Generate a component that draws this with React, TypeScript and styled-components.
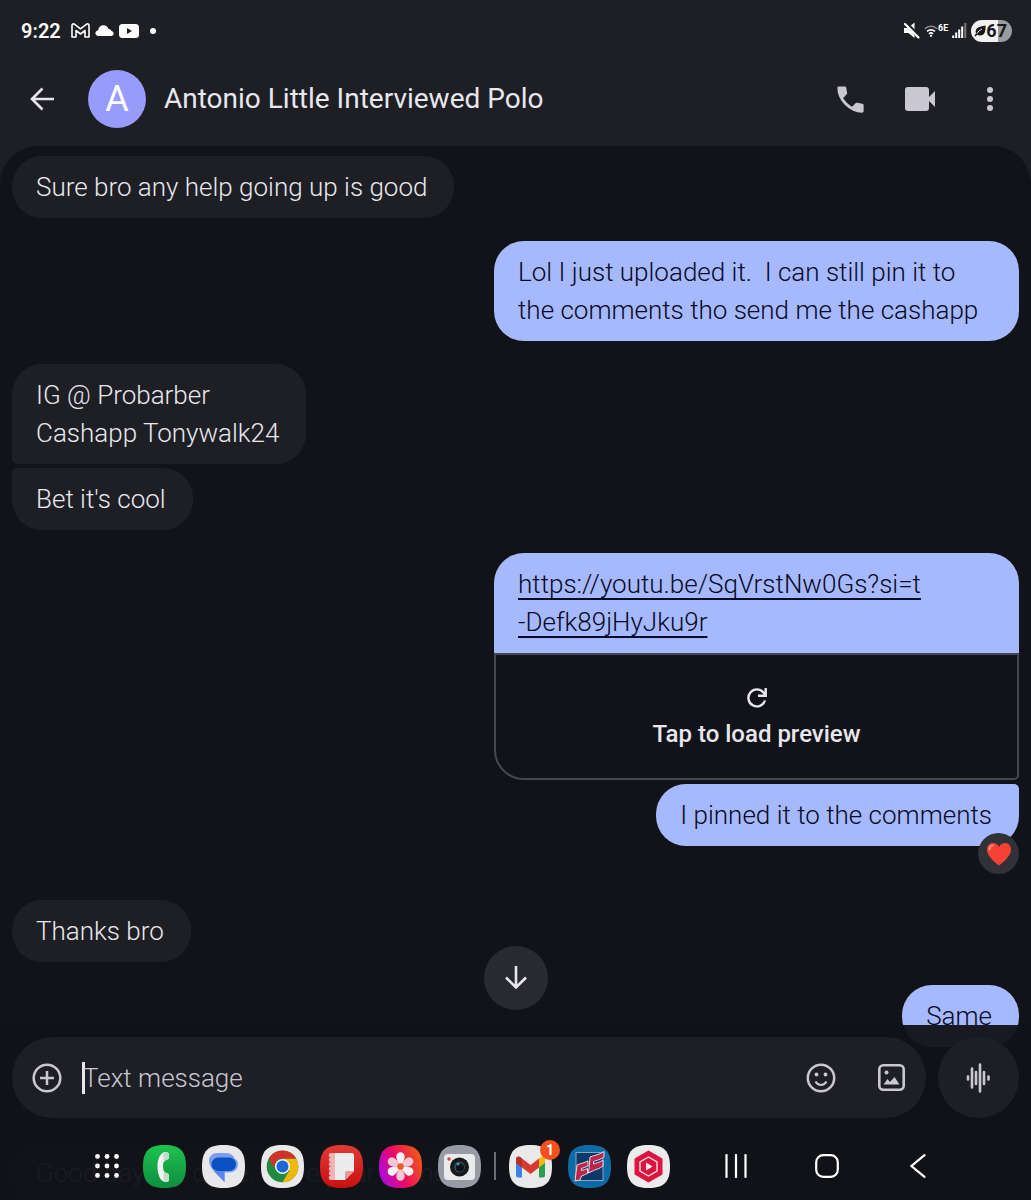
import React from 'react';
import styled, { createGlobalStyle, css } from 'styled-components';

const c = {
  bg: '#121318',
  surface: '#1e1f25',
  raised: '#292a2f',
  reaction: '#313238',
  outline: '#45464f',
  sent: '#a6b9ff',
  sentText: '#060a24',
  text: '#e8e7ee',
  muted: '#c9c8d2',
};

const GlobalStyle = createGlobalStyle`
  * { box-sizing: border-box; }
  body {
    margin: 0;
    background: ${c.surface};
    color: ${c.text};
    font-family: Roboto, "Noto Sans", sans-serif;
  }
  svg { display: block; flex: none; }
  button { font: inherit; color: inherit; background: none; border: 0; padding: 0; cursor: pointer; }
`;

const Screen = styled.div`
  height: 100vh;
  display: flex;
  flex-direction: column;
  overflow: hidden;
`;

const StatusBar = styled.div`
  display: flex;
  align-items: center;
  justify-content: space-between;
  height: 61px;
  padding: 0 19px 0 21px;
  color: #fff;
  flex: none;
`;

const StatusGroup = styled.div<{ $gap: number }>`
  display: flex;
  align-items: center;
  gap: ${p => p.$gap}px;
`;

const Clock = styled.time`
  font-size: 20px;
  font-weight: 600;
  margin-right: 5px;
`;

const Wifi = styled.div`
  display: flex;
  align-items: flex-start;
  font-size: 9px;
  line-height: 9px;
  font-weight: 700;
`;

const Battery = styled.div`
  display: flex;
  align-items: center;
  height: 22px;
  padding: 0 5px 0 3px;
  border-radius: 11px;
  background: linear-gradient(90deg, #f1f1f1 67%, #9b9c9e 67%);
  color: #17181c;
  font-size: 18px;
  line-height: 22px;
  font-weight: 700;
`;

const AppBar = styled.header`
  display: flex;
  align-items: center;
  height: 76px;
  margin-bottom: 9px;
  padding: 0 16px 0 24px;
  flex: none;
`;

const IconButton = styled.button<{ $size: number; $color?: string }>`
  display: flex;
  align-items: center;
  justify-content: center;
  width: ${p => p.$size}px;
  height: ${p => p.$size}px;
  color: ${p => p.$color || c.muted};
  flex: none;
`;

const Avatar = styled.div`
  display: flex;
  align-items: center;
  justify-content: center;
  width: 58px;
  height: 58px;
  margin: 0 18px 0 28px;
  border-radius: 50%;
  background: #979bfb;
  color: #fff;
  font-size: 36px;
  font-weight: 400;
  flex: none;
`;

const Title = styled.h1`
  flex: 1;
  margin: 0;
  font-size: 28px;
  line-height: 36px;
  font-weight: 400;
`;

const Actions = styled.div`
  display: flex;
  gap: 20px;
`;

const Body = styled.main`
  display: grid;
  grid-template: minmax(0, 1fr) / minmax(0, 1fr);
  flex: 1;
  min-height: 0;
  background: ${c.bg};
  border-radius: 38px 38px 0 0;
  overflow: hidden;
`;

const Thread = styled.section`
  grid-area: 1 / 1;
  display: flex;
  flex-direction: column;
  gap: 23px;
  padding: 10px 12px 0;
  overflow: hidden;
`;

const Group = styled.div<{ $sent?: boolean; $after?: number }>`
  display: flex;
  flex-direction: column;
  align-items: ${p => (p.$sent ? 'flex-end' : 'flex-start')};
  gap: 4px;
  margin-bottom: ${p => p.$after || 0}px;
  flex: none;
`;

type Join = 'top' | 'bottom';

const Bubble = styled.p<{ $sent?: boolean; $join?: Join }>`
  position: relative;
  margin: 0;
  max-width: 525px;
  padding: 12px 27px 12px 24px;
  border-radius: 30px;
  background: ${p => (p.$sent ? c.sent : c.surface)};
  color: ${p => (p.$sent ? c.sentText : c.text)};
  font-size: 26px;
  font-weight: 300;
  line-height: 38px;
  white-space: pre-wrap;
  ${p => p.$join === 'top' && (p.$sent
    ? css`border-top-right-radius: 5px;`
    : css`border-top-left-radius: 5px;`)}
  ${p => p.$join === 'bottom' && (p.$sent
    ? css`border-bottom-right-radius: 5px;`
    : css`border-bottom-left-radius: 5px;`)}
`;

const LinkCard = styled.article`
  width: 525px;
  max-width: 100%;
`;

const LinkText = styled.div`
  padding: 12px 24px;
  border-radius: 30px 30px 0 0;
  background: ${c.sent};
  font-size: 26px;
  font-weight: 300;
  line-height: 38px;
`;

const Link = styled.a`
  color: ${c.sentText};
  text-decoration-thickness: 2px;
  text-underline-offset: 5px;
  text-decoration-skip-ink: none;
`;

const Preview = styled.button`
  && {
    display: flex;
    flex-direction: column;
    align-items: center;
    justify-content: center;
    gap: 12px;
    width: 100%;
    height: 127px;
    padding-top: 2px;
    border: 2px solid ${c.outline};
    border-radius: 0 0 5px 30px;
    font-size: 24px;
    line-height: 28px;
    font-weight: 500;
  }
`;

const Reaction = styled.span`
  position: absolute;
  right: 0;
  bottom: -28px;
  display: flex;
  align-items: center;
  justify-content: center;
  width: 41px;
  height: 41px;
  border-radius: 50%;
  background: ${c.reaction};
`;

const Footer = styled.footer`
  grid-area: 1 / 1;
  align-self: end;
  position: relative;
  padding: 12px 12px 0;
  background: rgba(18, 19, 24, 0.96);
`;

const JumpButton = styled.button`
  && {
    position: absolute;
    left: 50%;
    bottom: 100%;
    display: flex;
    align-items: center;
    justify-content: center;
    width: 64px;
    height: 64px;
    margin: 0 0 15px -32px;
    border-radius: 50%;
    background: ${c.raised};
  }
`;

const Composer = styled.form`
  display: flex;
  gap: 12px;
`;

const Field = styled.label`
  display: flex;
  align-items: center;
  flex: 1;
  height: 81px;
  padding: 0 14px;
  border-radius: 41px;
  background: ${c.surface};
`;

const Caret = styled.span`
  width: 3px;
  height: 32px;
  margin: 0 -2px 0 14px;
  background: ${c.text};
`;

const TextInput = styled.input`
  flex: 1;
  min-width: 0;
  padding: 0;
  border: 0;
  outline: 0;
  background: none;
  color: ${c.text};
  font: 300 26px/38px Roboto, "Noto Sans", sans-serif;
  &::placeholder { color: ${c.muted}; opacity: 1; }
`;

const FieldActions = styled.div`
  display: flex;
  gap: 28px;
`;

const VoiceButton = styled(IconButton)`
  && {
    border-radius: 50%;
    background: ${c.surface};
  }
`;

const Taskbar = styled.nav`
  display: flex;
  align-items: center;
  gap: 13px;
  height: 82px;
  padding: 14px 0 0 75px;
  color: #fff;
`;

const AppRow = styled.div`
  display: flex;
  align-items: center;
  gap: 16px;
`;

const AppButton = styled.button`
  position: relative;
  flex: none;
`;

const Separator = styled.span`
  width: 2px;
  height: 28px;
  background: #6d6e73;
`;

const Badge = styled.span`
  position: absolute;
  top: -5px;
  right: -8px;
  width: 20px;
  height: 20px;
  border-radius: 50%;
  background: #f4511e;
  color: #fff;
  font-size: 14px;
  line-height: 20px;
  font-weight: 700;
  text-align: center;
`;

const NavRow = styled.div`
  display: flex;
  margin-left: 7px;
`;

const NavButton = styled.button`
  && {
    display: flex;
    align-items: center;
    justify-content: center;
    width: 91px;
    height: 44px;
  }
`;

const SQUIRCLE = 'M21.5 0C37 0 43 6 43 21.5S37 43 21.5 43 0 37 0 21.5 6 0 21.5 0z';

function AppIcon({ fill, children }: { fill: string; children: React.ReactNode }) {
  return (
    <svg width="43" height="43" viewBox="0 0 43 43" aria-hidden="true">
      <path d={SQUIRCLE} fill={fill} />
      {children}
    </svg>
  );
}

const PhoneApp = () => (
  <AppIcon fill="url(#phoneBg)">
    <defs>
      <linearGradient id="phoneBg" x1="0" y1="0" x2="0" y2="1">
        <stop offset="0" stopColor="#1fc24e" />
        <stop offset="1" stopColor="#0d8f3f" />
      </linearGradient>
    </defs>
    <path d="M22 7c-5 1-7.5 7-7.5 14.500S17 36 22 37c2 .4 4-.4 4-2.500v-3.800c0-1.700-1.300-2.300-2.700-2.700-2.400-.7-3.300-2.800-3.300-6.500s.9-5.800 3.300-6.500c1.400-.4 2.700-1 2.700-2.700V9.500C26 7.400 24 6.600 22 7z" fill="#f1f3f1" />
    <path d="M22 7c2-.4 4 .4 4 2.500v2.800c0 1.700-1.300 2.300-2.700 2.700-1 .3-1.700.8-2.200 1.500C20.500 13 20 9 22 7zM22 37c2 .4 4-.4 4-2.500v-3.800c0-1.700-1.300-2.300-2.700-2.700-1-.3-1.700-.8-2.200-1.500C20.500 30 20 35 22 37z" fill="#c3dcc9" />
  </AppIcon>
);

const MessagesApp = () => (
  <AppIcon fill="#e8e8ea">
    <path d="M14.500 8H24a9 9 0 0 1 8.500 5.500c2 1 3.500 3 3.500 5.500 0 5-4 8.500-9 8.500h-4.500V37L12 26.500C9 23 7 19.500 7 15.500A7.500 7.500 0 0 1 14.500 8z" fill="#7b9df0" />
    <path d="M12 26h10.500v11z" fill="#5c86ec" />
    <rect x="9.500" y="12.500" width="24.500" height="13.500" rx="6.700" fill="#0b50c0" />
  </AppIcon>
);

const ChromeApp = () => (
  <AppIcon fill="#e9e9e9">
    <circle cx="21.500" cy="21.500" r="15.800" fill="#1f8a40" />
    <path d="M21.500 13.500H35.200a15.800 15.800 0 0 1-13.700 23.800l6.900-11.800z" fill="#eeb80c" />
    <path d="M7.800 13.600a15.800 15.800 0 0 1 27.400-.1H21.500a8 8 0 0 0-6.900 12z" fill="#cf3329" />
    <circle cx="21.500" cy="21.500" r="7.600" fill="#f1f1f1" />
    <circle cx="21.500" cy="21.500" r="6" fill="#1a67d8" />
  </AppIcon>
);

const NotesApp = () => (
  <AppIcon fill="url(#notesBg)">
    <defs>
      <linearGradient id="notesBg" x1="0" y1="0" x2="0" y2="1">
        <stop offset="0" stopColor="#e23a38" />
        <stop offset="1" stopColor="#c90f10" />
      </linearGradient>
    </defs>
    <path d="M11 8h4v27h-4a2 2 0 0 1 0-4.500 2.200 2.200 0 0 1 0-4.500 2.200 2.200 0 0 1 0-4.500 2.200 2.200 0 0 1 0-4.500 2.200 2.200 0 0 1 0-4.500 2.200 2.200 0 0 1 0-4.500z" fill="#f0b4b3" />
    <path d="M15 8h17a2 2 0 0 1 2 2v16l-9 9H15z" fill="#ececec" />
    <path d="M34 26l-9 9v-7a2 2 0 0 1 2-2z" fill="#e39a99" />
  </AppIcon>
);

const GalleryApp = () => (
  <AppIcon fill="url(#galleryBg)">
    <defs>
      <linearGradient id="galleryBg" x1="0" y1=".7" x2="1" y2=".3">
        <stop offset="0" stopColor="#a80be0" />
        <stop offset=".45" stopColor="#ec0a67" />
        <stop offset="1" stopColor="#ef5a12" />
      </linearGradient>
    </defs>
    {[60, 180, 300, 0, 120, 240].map(a => (
      <path key={a} d="M21.500 21.500c-1.500-3-4.200-6-4.200-10a4.200 4.200 0 0 1 8.400 0c0 4-2.700 7-4.200 10z" fill={a % 120 === 0 ? '#f9f3f5' : '#f3c8d5'} transform={`rotate(${a} 21.5 21.5)`} />
    ))}
    <circle cx="21.500" cy="21.500" r="3.200" fill="#ee5a22" />
  </AppIcon>
);

const CameraApp = () => (
  <AppIcon fill="#969ba5">
    <rect x="6" y="9" width="31" height="26" rx="4" fill="#e9eaeb" />
    <circle cx="11" cy="14" r="1.700" fill="#e23b3b" />
    <circle cx="21.500" cy="22" r="9.500" fill="#17181b" />
    <circle cx="21.500" cy="22" r="5.500" fill="#2c4a5c" />
    <circle cx="22" cy="22.500" r="4" fill="#0b1015" />
    <circle cx="20" cy="19" r="1.500" fill="#4e8f96" />
  </AppIcon>
);

const GmailApp = () => (
  <AppIcon fill="#e9e9e9">
    <path d="M7 17v13.500a2 2 0 0 0 2 2h4V21z" fill="#3f7fe8" />
    <path d="M36 17v13.500a2 2 0 0 1-2 2h-4V21z" fill="#2b9e4b" />
    <path d="M30 13.500 32 12c2-1.400 4 0 4 2.300V18l-6 4.500z" fill="#f2b90d" />
    <path d="M7 14.300c0-2.300 2.200-3.700 4-2.300l10.500 8 8.500-6.500v9L21.500 29 13 22.500 7 18z" fill="#d83a30" />
    <path d="M7 14.300V18l6 4.500v-9L11 12c-1.800-1.400-4 0-4 2.300z" fill="#b9302a" />
  </AppIcon>
);

const FinanceApp = () => (
  <AppIcon fill="#0f6ba6">
    <rect x="8" y="7.500" width="27" height="28" fill="#0d3868" stroke="#7fa8c9" strokeWidth="1" />
    <path d="M22 12c5-2 9-2 14-5.500v5.500c-4 3-7 3-10.500 4.500V19c3-1 6-1.500 9.500-4v6c-4 3-6 3-9.500 4.500L20.500 28z" fill="#bd2648" stroke="#e6d9e2" strokeWidth="1" />
    <path d="M9 20c3-1.500 7-2 11-4v5c-2 1-4 1.500-6.500 2.500v2c2-.5 4-1 6-2v5c-2 1-4 1.500-6 2.500L12 35l-5 1z" fill="#bd2648" stroke="#e6d9e2" strokeWidth="1" />
  </AppIcon>
);

const StudioApp = () => (
  <AppIcon fill="#ebebeb">
    <path d="M21.500 6.500 34.500 14v15l-13 7.500-13-7.500V14z" fill="#dd1440" stroke="#dd1440" strokeWidth="2" strokeLinejoin="round" />
    <path d="M21.500 12 30 16.800v9.400L21.500 31 13 26.200v-9.400z" fill="none" stroke="#f2dfe3" strokeWidth="1.400" strokeLinejoin="round" />
    <path d="M19 17.500v8l6.500-4z" fill="#f6eef0" />
  </AppIcon>
);

const stroke = { fill: 'none', stroke: 'currentColor' } as const;

export default function App() {
  return (
    <Screen>
      <GlobalStyle />
      <StatusBar>
        <StatusGroup $gap={5}>
          <Clock>9:22</Clock>
          <svg width="19" height="15" viewBox="0 0 19 15">
            <path d="M1 14V2.500C1 1 2.500.5 3.700 1.300l5.800 4.500 5.800-4.500C16.500.5 18 1 18 2.500V14h-4V7.500L9.500 11 5 7.500V14z" {...stroke} strokeWidth="1.600" strokeLinejoin="round" />
          </svg>
          <svg width="19" height="11" viewBox="0 0 19 11">
            <path d="M3.500 11C-.5 11-.5 6 3 5.500 3.500 2 6 .3 8.500.3c2.500 0 4.300 1.500 5 3.700 1.500-.2 2.500.7 2.800 2C19.500 6.500 19.500 11 16 11z" fill="currentColor" />
          </svg>
          <svg width="20" height="14" viewBox="0 0 20 14">
            <rect width="20" height="14" rx="3.500" fill="currentColor" />
            <path d="M8 4v6l5-3z" fill={c.surface} />
          </svg>
          <svg width="18" height="6" viewBox="0 0 18 6"><circle cx="9" cy="3" r="3" fill="currentColor" /></svg>
        </StatusGroup>
        <StatusGroup $gap={4}>
          <svg width="17" height="17" viewBox="0 0 17 17">
            <path d="M1 6h4l6.500-5.500v15.500L5.500 11H1z" fill="currentColor" />
            <path d="M2 .5 16.500 15" stroke={c.surface} strokeWidth="4" />
            <path d="M2 2 15.500 15.500" stroke="currentColor" strokeWidth="2.200" strokeLinecap="round" />
          </svg>
          <Wifi>
            <svg width="14" height="14" viewBox="0 0 16 14">
              <path d="M1 4.500a10 10 0 0 1 14 0" {...stroke} strokeWidth="1.800" opacity=".5" />
              <path d="M3.500 7.500a6.500 6.500 0 0 1 9 0M5.700 10.200a3.400 3.400 0 0 1 4.600 0" {...stroke} strokeWidth="1.800" />
              <circle cx="8" cy="12.500" r="1.300" fill="currentColor" />
            </svg>
            6E
          </Wifi>
          <svg width="15" height="15" viewBox="0 0 15 15">
            <path d="M1.200 12.500V15M4.200 9.500V15M7.200 6.500V15M10.200 3.500V15" {...stroke} strokeWidth="2" />
            <path d="M13.300 0V15" {...stroke} strokeWidth="2" opacity=".4" />
          </svg>
          <Battery>
            <svg width="12" height="12" viewBox="0 0 12 12">
              <path d="M11.500.5c.3 5-.5 10-5.500 10-1 0-1.800-.2-2.500-.7L1 11.500l-.5-1L2 8.500C.5 3 5 1.500 11.500.5z" fill="currentColor" />
              <path d="M3 8.500c1-2 3-3.500 5-4.500" stroke="#f1f1f1" strokeWidth="1" fill="none" />
            </svg>
            67
          </Battery>
        </StatusGroup>
      </StatusBar>

      <AppBar>
        <IconButton $size={36} $color={c.text} aria-label="Back">
          <svg width="24" height="24" viewBox="0 0 24 24"><path d="M24 12H2M12.500 1.500 2 12l10.500 10.500" {...stroke} strokeWidth="2.600" /></svg>
        </IconButton>
        <Avatar>A</Avatar>
        <Title>Antonio Little Interviewed Polo</Title>
        <Actions>
          <IconButton $size={50} aria-label="Call">
            <svg width="35" height="35" viewBox="0 0 24 24"><path fill="currentColor" d="M19.950 21q-3.125 0-6.175-1.363t-5.550-3.862-3.862-5.550T3 4.050q0-.45.3-.75t.75-.3H8.100q.35 0 .625.238t.325.562l.65 3.500q.05.4-.025.675T9.400 8.450L6.975 10.900q.5.925 1.187 1.787t1.513 1.663q.775.775 1.625 1.438T13.100 17l2.350-2.350q.225-.225.588-.338t.712-.062l3.450.7q.35.1.575.363T21 15.900v4.050q0 .45-.3.75t-.75.3z" /></svg>
          </IconButton>
          <IconButton $size={50} aria-label="Video call">
            <svg width="30" height="24" viewBox="0 0 30 24"><rect width="24" height="24" rx="3" fill="currentColor" /><path d="M23 11 30 4v16l-7-7z" fill="currentColor" /></svg>
          </IconButton>
          <IconButton $size={50} aria-label="More options">
            <svg width="6" height="24" viewBox="0 0 6 24"><g fill="currentColor"><circle cx="3" cy="3" r="3" /><circle cx="3" cy="12" r="3" /><circle cx="3" cy="21" r="3" /></g></svg>
          </IconButton>
        </Actions>
      </AppBar>

      <Body>
        <Thread>
          <Group><Bubble>Sure bro any help going up is good</Bubble></Group>
          <Group $sent><Bubble $sent>{'Lol I just uploaded it.  I can still pin it to the comments tho send me the cashapp'}</Bubble></Group>
          <Group>
            <Bubble $join="bottom">{'IG @ Probarber\nCashapp Tonywalk24'}</Bubble>
            <Bubble $join="top">Bet it's cool</Bubble>
          </Group>
          <Group $sent $after={31}>
            <LinkCard>
              <LinkText>
                <Link href="https://youtu.be/SqVrstNw0Gs?si=t-Defk89jHyJku9r">https://youtu.be/SqVrstNw0Gs?si=t<br />-Defk89jHyJku9r</Link>
              </LinkText>
              <Preview>
                <svg width="20" height="20" viewBox="0 0 20 20">
                  <path d="M18 12.500A8.500 8.500 0 1 1 16.500 4.500L18.500 7" {...stroke} strokeWidth="2.400" />
                  <path d="M18.700 0v7.700H11" {...stroke} strokeWidth="2.400" />
                </svg>
                Tap to load preview
              </Preview>
            </LinkCard>
            <Bubble $sent $join="top">
              I pinned it to the comments
              <Reaction role="img" aria-label="Heart">
                <svg width="26" height="24" viewBox="0 0 26 24">
                  <path d="M13 23.500C8 19.500 1 14 1 7.500 1 3.500 3.800 1 7 1c2.600 0 4.800 1.500 6 4 1.200-2.500 3.400-4 6-4 3.200 0 6 2.500 6 6.500 0 6.500-7 12-12 16z" fill="#f44336" />
                  <path d="M3.500 7.500C3.500 5 5 3.500 7 3.500" stroke="#ff8a80" strokeWidth="2" strokeLinecap="round" fill="none" />
                </svg>
              </Reaction>
            </Bubble>
          </Group>
          <Group><Bubble>Thanks bro</Bubble></Group>
          <Group $sent $after={72}><Bubble $sent>Same</Bubble></Group>
          <Group><Bubble>Good day my dude. Have your home</Bubble></Group>
        </Thread>

        <Footer>
          <JumpButton aria-label="Scroll to latest">
            <svg width="22" height="24" viewBox="0 0 22 24"><path d="M11 0v22M1 11.500l10 10 10-10" {...stroke} strokeWidth="2.600" /></svg>
          </JumpButton>
          <Composer onSubmit={e => e.preventDefault()}>
            <Field>
              <IconButton type="button" $size={42} aria-label="Add attachment">
                <svg width="30" height="30" viewBox="0 0 30 30"><circle cx="15" cy="15" r="13.300" {...stroke} strokeWidth="2.500" /><path d="M15 8v14M8 15h14" {...stroke} strokeWidth="2.500" /></svg>
              </IconButton>
              <Caret />
              <TextInput aria-label="Text message" placeholder="Text message" />
              <FieldActions>
                <IconButton type="button" $size={42} aria-label="Emoji">
                  <svg width="30" height="30" viewBox="0 0 30 30">
                    <circle cx="15" cy="15" r="13.200" {...stroke} strokeWidth="2.500" />
                    <circle cx="10.500" cy="11.500" r="1.900" fill="currentColor" /><circle cx="19.500" cy="11.500" r="1.900" fill="currentColor" />
                    <path d="M9.500 18.500q2 3.500 5.500 3.500t5.500-3.500" {...stroke} strokeWidth="2.200" />
                  </svg>
                </IconButton>
                <IconButton type="button" $size={42} aria-label="Gallery">
                  <svg width="27" height="27" viewBox="0 0 27 27">
                    <rect x="1.300" y="1.300" width="24.400" height="24.400" rx="4" {...stroke} strokeWidth="2.600" />
                    <circle cx="8.500" cy="8.500" r="2" fill="currentColor" />
                    <path d="M5.500 20.500 9.500 15l2.500 3 4.500-5 5 7.500z" fill="currentColor" />
                  </svg>
                </IconButton>
              </FieldActions>
            </Field>
            <VoiceButton type="button" $size={81} aria-label="Record voice message">
              <svg width="26" height="30" viewBox="0 0 26 30">
                <path d="M2 13.500v3M6 5.500v19M10 9v12M14 1.500v27M18 9v12M22.500 13.500v3" {...stroke} strokeWidth="2.600" strokeLinecap="round" />
              </svg>
            </VoiceButton>
          </Composer>
          <Taskbar aria-label="Taskbar">
            <AppRow>
              <IconButton $size={40} $color="#fff" aria-label="All apps">
                <svg width="24" height="24" viewBox="0 0 24 24">
                  <g fill="currentColor">
                    {[2.5, 12, 21.5].map(y => [2.5, 12, 21.5].map(x => <circle key={`${x}-${y}`} cx={x} cy={y} r="2.400" />))}
                  </g>
                </svg>
              </IconButton>
              <AppButton aria-label="Phone"><PhoneApp /></AppButton>
              <AppButton aria-label="Messages"><MessagesApp /></AppButton>
              <AppButton aria-label="Chrome"><ChromeApp /></AppButton>
              <AppButton aria-label="Notes"><NotesApp /></AppButton>
              <AppButton aria-label="Gallery"><GalleryApp /></AppButton>
              <AppButton aria-label="Camera"><CameraApp /></AppButton>
            </AppRow>
            <Separator />
            <AppRow>
              <AppButton aria-label="Gmail"><GmailApp /><Badge>1</Badge></AppButton>
              <AppButton aria-label="Finance"><FinanceApp /></AppButton>
              <AppButton aria-label="Studio"><StudioApp /></AppButton>
            </AppRow>
            <NavRow>
              <NavButton aria-label="Recents">
                <svg width="22" height="24" viewBox="0 0 22 24"><path d="M1.500 1v22M11 1v22M20.500 1v22" {...stroke} strokeWidth="2.200" strokeLinecap="round" /></svg>
              </NavButton>
              <NavButton aria-label="Home">
                <svg width="24" height="24" viewBox="0 0 24 24"><rect x="1.200" y="1.200" width="21.600" height="21.600" rx="7" {...stroke} strokeWidth="2.200" /></svg>
              </NavButton>
              <NavButton aria-label="Back">
                <svg width="16" height="24" viewBox="0 0 16 24"><path d="M14.500 1.200 1.500 12l13 10.800" {...stroke} strokeWidth="2.200" strokeLinecap="round" /></svg>
              </NavButton>
            </NavRow>
          </Taskbar>
        </Footer>
      </Body>
    </Screen>
  );
}
